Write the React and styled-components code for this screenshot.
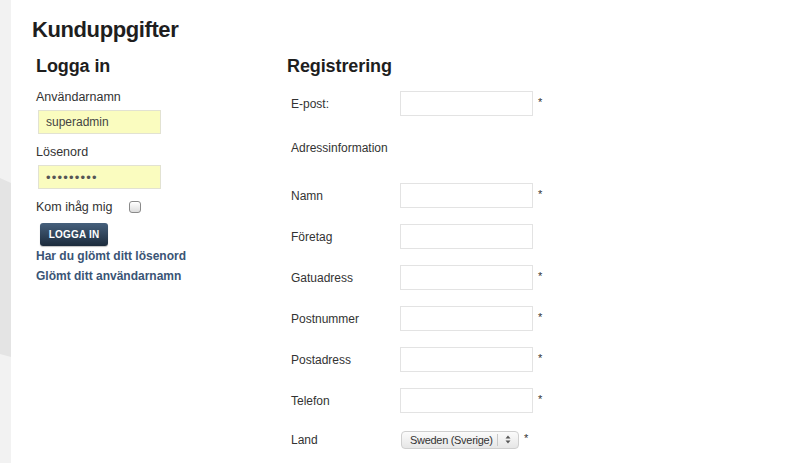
import React from "react";
import styled, { createGlobalStyle } from "styled-components";

const GlobalStyle = createGlobalStyle`
  html, body {
    margin: 0;
    padding: 0;
    background: #ffffff;
  }
  body {
    font-family: "Liberation Sans", Arial, sans-serif;
    color: #333333;
  }
`;

const Page = styled.div`
  display: flex;
  min-height: 100vh;
`;

const Gutter = styled.div`
  flex: none;
  width: 11px;
  background: #f2f2f2;
`;

const GutterBand = styled.div`
  margin-top: 178px;
  height: 179px;
  background: #e4e4e4;
  clip-path: polygon(0 0, 100% 5px, 100% 100%, 0 176px);
`;

const Main = styled.main`
  flex: 1;
  padding: 17px 0 0 21px;
`;

const Title = styled.h1`
  margin: 0 0 12px;
  font-size: 22px;
  line-height: 26px;
  letter-spacing: -0.4px;
  font-weight: 700;
  color: #1e1e1e;
`;

const Columns = styled.div`
  display: grid;
  grid-template-columns: 251px 1fr;
  margin-left: 4px;
`;

const Heading = styled.h2`
  margin: 0;
  font-size: 18px;
  line-height: 22px;
  letter-spacing: -0.1px;
  font-weight: 700;
  color: #1e1e1e;
`;

const LoginForm = styled.form`
  display: flex;
  flex-direction: column;
  align-items: flex-start;
`;

const FieldLabel = styled.label`
  display: block;
  margin-top: ${(p) => p.$top}px;
  font-size: 12.5px;
  line-height: 16px;
  color: #333;
`;

const LoginInput = styled.input`
  box-sizing: border-box;
  margin: 5px 0 0 2px;
  width: 123px;
  height: 24px;
  padding: 0 7px;
  border: 1px solid #e2e2d2;
  background: #fafcbf;
  font-family: "Liberation Sans", Arial, sans-serif;
  font-size: 12px;
  color: #444;
  outline: none;

  &[type="password"] {
    font-size: 13px;
    letter-spacing: 1.2px;
    color: #555;
  }
`;

const RememberRow = styled.div`
  display: flex;
  align-items: center;
  gap: 17px;
  margin-top: 10px;
  font-size: 12.5px;
  line-height: 16px;
`;

const Checkbox = styled.input.attrs({ type: "checkbox" })`
  appearance: none;
  margin: 0;
  width: 12px;
  height: 12px;
  border: 1px solid #8a8a8a;
  border-radius: 3px;
  background: linear-gradient(#ffffff, #dcdcdc);
  box-shadow: inset 0 1px 0 #fff;
`;

const LoginButton = styled.button`
  margin: 8px 0 0 4px;
  width: 68px;
  height: 23px;
  padding: 0;
  border: none;
  border-radius: 3px;
  background: linear-gradient(#46607c, #1c2b3c);
  box-shadow: 0 1px 1px rgba(0, 0, 0, 0.25);
  color: #ffffff;
  font-family: "Liberation Sans", Arial, sans-serif;
  font-size: 10px;
  font-weight: 700;
  letter-spacing: 0.2px;
`;

const HelpLink = styled.a`
  display: block;
  margin-top: ${(p) => p.$top}px;
  font-size: 12px;
  line-height: 16px;
  font-weight: 700;
  color: #3a5475;
  text-decoration: none;
`;

const RegisterForm = styled.form`
  display: flex;
  flex-direction: column;
  padding: 14px 0 0 4px;
`;

const Row = styled.div`
  display: grid;
  grid-template-columns: 104px auto auto;
  justify-content: start;
  align-items: center;
  column-gap: 5px;
  height: ${(p) => p.$height || 25}px;
  margin-top: ${(p) => p.$top ?? 16}px;
  font-size: 12px;
`;

const RowLabel = styled.label`
  color: #333;
`;

const TextInput = styled.input`
  box-sizing: border-box;
  width: 133px;
  height: 25px;
  margin: 0;
  border: 1px solid #e3e3e3;
  background: #fff;
  outline: none;
`;

const Required = styled.span`
  font-size: 11px;
  color: #333;
  align-self: center;
  margin-top: -3px;
`;

const SelectWrap = styled.div`
  position: relative;
  margin-left: 1px;
`;

const Select = styled.select`
  appearance: none;
  box-sizing: border-box;
  width: 118px;
  height: 18px;
  margin: 0;
  padding: 0 0 0 8px;
  border: 1px solid #cfcfcf;
  border-radius: 4px;
  background: linear-gradient(#fbfbfb, #e6e6e6);
  font-family: "Liberation Sans", Arial, sans-serif;
  font-size: 11px;
  letter-spacing: -0.3px;
  color: #333;
  outline: none;
`;

const SelectArrows = styled.span`
  position: absolute;
  top: 3px;
  right: 1px;
  bottom: 3px;
  width: 20px;
  display: flex;
  align-items: center;
  justify-content: center;
  border-left: 1px solid #c8c8c8;
  pointer-events: none;
`;

const fields = [
  { label: "Namn", required: true },
  { label: "Företag", required: false },
  { label: "Gatuadress", required: true },
  { label: "Postnummer", required: true },
  { label: "Postadress", required: true },
  { label: "Telefon", required: true },
];

export default function App() {
  return (
    <>
      <GlobalStyle />
      <Page>
        <Gutter>
          <GutterBand />
        </Gutter>
        <Main>
          <Title>Kunduppgifter</Title>
          <Columns>
            <section>
              <Heading>Logga in</Heading>
              <LoginForm onSubmit={(e) => e.preventDefault()}>
                <FieldLabel $top={12} htmlFor="username">
                  Användarnamn
                </FieldLabel>
                <LoginInput id="username" defaultValue="superadmin" />
                <FieldLabel $top={10} htmlFor="password">
                  Lösenord
                </FieldLabel>
                <LoginInput id="password" type="password" defaultValue="superadmi" />
                <RememberRow>
                  <span>Kom ihåg mig</span>
                  <Checkbox />
                </RememberRow>
                <LoginButton type="submit">LOGGA IN</LoginButton>
                <HelpLink $top={2} href="#">
                  Har du glömt ditt lösenord
                </HelpLink>
                <HelpLink $top={4} href="#">
                  Glömt ditt användarnamn
                </HelpLink>
              </LoginForm>
            </section>

            <section>
              <Heading>Registrering</Heading>
              <RegisterForm onSubmit={(e) => e.preventDefault()}>
                <Row $top={0}>
                  <RowLabel>E-post:</RowLabel>
                  <TextInput />
                  <Required>*</Required>
                </Row>
                <Row $top={19}>
                  <RowLabel>Adressinformation</RowLabel>
                </Row>
                {fields.map((f, i) => (
                  <Row key={f.label} $top={i === 0 ? 23 : 16}>
                    <RowLabel>{f.label}</RowLabel>
                    <TextInput />
                    {f.required && <Required>*</Required>}
                  </Row>
                ))}
                <Row $top={16} $height={21}>
                  <RowLabel>Land</RowLabel>
                  <SelectWrap>
                    <Select defaultValue="SE">
                      <option value="SE">Sweden (Sverige)</option>
                    </Select>
                    <SelectArrows>
                      <svg width="6" height="9" viewBox="0 0 6 9">
                        <path d="M0.5 3.5 L3 0.5 L5.5 3.5 Z" fill="#555" />
                        <path d="M0.5 5.5 L3 8.5 L5.5 5.5 Z" fill="#555" />
                      </svg>
                    </SelectArrows>
                  </SelectWrap>
                  <Required>*</Required>
                </Row>
              </RegisterForm>
            </section>
          </Columns>
        </Main>
      </Page>
    </>
  );
}
